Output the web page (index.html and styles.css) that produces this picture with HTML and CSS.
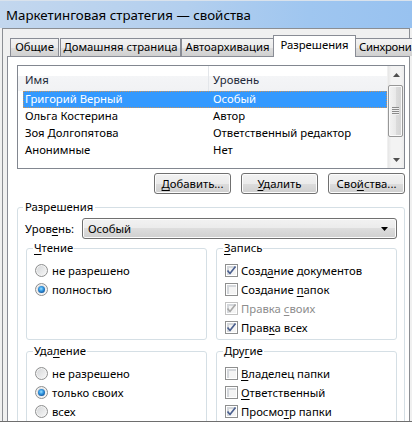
FILE: index.html
```html
<!DOCTYPE html>
<html lang="ru">
<head>
  <meta charset="UTF-8" />
  <title>Маркетинговая стратегия — свойства</title>
  <link rel="stylesheet" href="styles.css">
</head>
<body>
  <div class="window">
    <div class="titlebar">Маркетинговая стратегия — свойства</div>
    <div class="client">
      <div class="tabs">
        <div class="tab t-general">Общие</div>
        <div class="tab t-home">Домашняя страница</div>
        <div class="tab t-archive">Автоархивация</div>
        <div class="tab active">Разрешения</div>
        <div class="tab t-sync">Синхрони</div>
      </div>
      <div class="panel">
        <div class="listview">
          <div class="lv-main">
            <div class="lv-head">
              <div class="col-name">Имя</div>
              <div class="col-level">Уровень</div>
            </div>
            <div class="lv-row selected"><div class="col-name">Григорий Верный</div><div class="col-level">Особый</div></div>
            <div class="lv-row"><div class="col-name">Ольга Костерина</div><div class="col-level">Автор</div></div>
            <div class="lv-row"><div class="col-name">Зоя Долгопятова</div><div class="col-level">Ответственный редактор</div></div>
            <div class="lv-row"><div class="col-name">Анонимные</div><div class="col-level">Нет</div></div>
          </div>
          <div class="vscroll">
            <div class="sb-btn">
              <svg width="7" height="4" viewBox="0 0 7 4"><path d="M0 4 L3.5 0 L7 4 Z" fill="#4f4f4f"/></svg>
            </div>
            <div class="sb-track">
              <div class="sb-thumb"><span class="grip"></span></div>
            </div>
            <div class="sb-btn">
              <svg width="7" height="4" viewBox="0 0 7 4"><path d="M0 0 L3.5 4 L7 0 Z" fill="#4f4f4f"/></svg>
            </div>
          </div>
        </div>

        <div class="actions">
          <button class="btn"><u>Д</u>обавить...</button>
          <button class="btn"><u>У</u>далить</button>
          <button class="btn">Сво<u>й</u>ства...</button>
        </div>

        <fieldset class="group outer">
          <legend>Разрешения</legend>
          <div class="level-row">
            <span class="level-label">Уров<u>е</u>нь:</span>
            <div class="combo">
              <span>Особый</span>
              <svg width="7" height="4" viewBox="0 0 7 4"><path d="M0 0 L3.5 4 L7 0 Z" fill="#000"/></svg>
            </div>
          </div>

          <div class="subgroups">
            <fieldset class="group sub">
              <legend><u>Ч</u>тение</legend>
              <div class="opt"><span class="radio"></span><span>не разрешено</span></div>
              <div class="opt"><span class="radio on"></span><span>полностью</span></div>
            </fieldset>

            <fieldset class="group sub">
              <legend><u>З</u>апись</legend>
              <div class="opt"><span class="check on"><svg width="11" height="11" viewBox="0 0 11 11"><path d="M1.5 5.5 L4 8.5 L9.5 1.5" /></svg></span><span>Созд<u>а</u>ние документов</span></div>
              <div class="opt"><span class="check"></span><span>Создание <u>п</u>апок</span></div>
              <div class="opt disabled"><span class="check on"><svg width="11" height="11" viewBox="0 0 11 11"><path d="M1.5 5.5 L4 8.5 L9.5 1.5" /></svg></span><span>Правка <u>с</u>воих</span></div>
              <div class="opt"><span class="check on"><svg width="11" height="11" viewBox="0 0 11 11"><path d="M1.5 5.5 L4 8.5 L9.5 1.5" /></svg></span><span>Прав<u>к</u>а всех</span></div>
            </fieldset>

            <fieldset class="group sub">
              <legend>Уда<u>л</u>ение</legend>
              <div class="opt"><span class="radio"></span><span>не разрешено</span></div>
              <div class="opt"><span class="radio on"></span><span>только своих</span></div>
              <div class="opt"><span class="radio"></span><span>всех</span></div>
            </fieldset>

            <fieldset class="group sub">
              <legend>Дру<u>г</u>ие</legend>
              <div class="opt"><span class="check"></span><span><u>В</u>ладелец папки</span></div>
              <div class="opt"><span class="check"></span><span><u>О</u>тветственный</span></div>
              <div class="opt"><span class="check on"><svg width="11" height="11" viewBox="0 0 11 11"><path d="M1.5 5.5 L4 8.5 L9.5 1.5" /></svg></span><span>Просмо<u>т</u>р папки</span></div>
            </fieldset>
          </div>
        </fieldset>
      </div>
    </div>
  </div>
</body>
</html>
```

FILE: styles.css
```css
* {
  box-sizing: border-box;
}

body {
  margin: 0;
  background-color: #f0f0f0;
  font-family: 'Noto Sans', sans-serif;
  font-size: 11.3px;
  color: #000;
}

u {
  text-decoration-thickness: 1px;
  text-underline-offset: 2px;
}

.window {
  width: 412px;
  height: 422px;
  overflow: hidden;
  display: flex;
  flex-direction: column;
  background-color: #f0f0f0;
  border-bottom: 1px solid #6e6e6e;
}

.titlebar {
  flex: none;
  height: 28px;
  padding-left: 6px;
  display: flex;
  align-items: center;
  font-size: 13.3px;
  background: linear-gradient(to right, #c3d7ee 0%, #b3cfee 45%, #9fc6f0 75%, #98c2f0 100%);
  border-top: 1px solid #d9e2ec;
}

.client {
  flex: 1;
  margin: 0 2px;
  padding-left: 4px;
  border-left: 1px solid #8b8e93;
  border-right: 1px solid #8b8e93;
  border-top: 1px solid #8b8e93;
}

/* tabs */
.tabs {
  display: flex;
  align-items: flex-end;
  height: 28px;
  padding-left: 3px;
}

.tab {
  flex: none;
  height: 18px;
  margin-bottom: 1px;
  border: 1px solid #898c95;
  border-bottom: none;
  line-height: 16px;
  text-align: center;
  white-space: nowrap;
  background: linear-gradient(#f3f3f3, #ebebeb 50%, #dedede 50%, #d0d0d0);
}

.t-general { width: 49px; }
.t-home { width: 121px; margin-left: 1px; }
.t-archive { width: 93px; }
.t-sync { padding: 0 0 0 3px; border-right: none; letter-spacing: -0.25px; }

.tab.active {
  position: relative;
  z-index: 2;
  width: 83px;
  height: 22px;
  margin: 0 -1px 0 -1px;
  padding-top: 1px;
  background: #fff;
}

.panel {
  margin-top: -1px;
  height: 400px;
  padding: 8px 0 0 9px;
  background: #fff;
  border-top: 1px solid #898c95;
  border-left: 1px solid #898c95;
}

/* list view */
.listview {
  display: flex;
  width: 388px;
  height: 104px;
  border: 1px solid #828790;
  background: #fff;
}

.lv-main {
  flex: 1;
  overflow: hidden;
}

.lv-head {
  display: flex;
  height: 25px;
  background: linear-gradient(#fff 0%, #fff 40%, #f4f5f7 40%, #f1f2f4 100%);
  color: #1e2a3a;
}

.lv-head .col-name {
  width: 191px;
  padding: 6px 0 0 7px;
  border-right: 1px solid #e3e6ea;
}

.lv-head .col-level {
  padding: 6px 0 0 4px;
}

.lv-row {
  display: flex;
  height: 17px;
  margin-left: 5px;
  line-height: 16px;
}

.lv-row .col-name {
  width: 186px;
  padding-left: 2px;
}

.lv-row .col-level {
  padding-left: 4px;
}

.lv-row.selected {
  background: #3399ff;
  color: #fff;
  outline: 1px dotted #c7935e;
  outline-offset: -1px;
}

.vscroll {
  flex: none;
  width: 17px;
  display: flex;
  flex-direction: column;
  background: linear-gradient(to right, #e6e6e6, #f3f3f3 20%, #f3f3f3 80%, #ececec);
  border-left: 1px solid #f0f0f0;
}

.sb-btn {
  height: 17px;
  display: flex;
  align-items: center;
  justify-content: center;
}

.sb-track {
  flex: 1;
  padding: 2px 1px 0 0;
}

.sb-thumb {
  height: 52px;
  border: 1px solid #979797;
  border-radius: 2px;
  background: linear-gradient(to right, #f3f3f3, #e9e9e9 50%, #dcdcdc 50%, #d3d3d3);
  box-shadow: inset 0 0 0 1px #fafafa;
  display: flex;
  align-items: center;
  justify-content: center;
}

.grip {
  width: 7px;
  height: 8px;
  background: repeating-linear-gradient(#8a8a8a 0, #8a8a8a 1px, #f0f0f0 1px, #f0f0f0 2px);
}

/* buttons */
.actions {
  width: 388px;
  margin-top: 4px;
  display: flex;
  justify-content: flex-end;
  gap: 10px;
}

.btn {
  width: 77px;
  height: 21px;
  padding: 0;
  font-family: inherit;
  font-size: inherit;
  color: #000;
  border: 1px solid #707070;
  border-radius: 3px;
  background: linear-gradient(#f2f2f2, #ebebeb 50%, #dddddd 50%, #cfcfcf);
  box-shadow: inset 0 0 0 1px #fcfcfc;
}

/* group boxes */
.group {
  margin: 0;
  min-width: 0;
  border: 1px solid #d5dfe5;
  border-radius: 3px;
}

.group legend {
  line-height: 16px;
  padding: 0 2px;
}

.outer {
  width: 388px;
  margin-top: 5px;
  padding: 0 7px 0 8px;
}

.outer > legend {
  margin-left: -3px;
}

.level-row {
  display: flex;
  align-items: center;
  height: 21px;
  margin-top: 3px;
}

.level-label {
  width: 57px;
  margin-left: -1px;
}

.combo {
  flex: 1;
  height: 21px;
  display: flex;
  align-items: center;
  justify-content: space-between;
  padding: 0 8px 0 5px;
  border: 1px solid #707070;
  border-radius: 3px;
  background: linear-gradient(#f2f2f2, #ebebeb 50%, #dddddd 50%, #cfcfcf);
  box-shadow: inset 0 0 0 1px #fcfcfc;
}

.subgroups {
  display: grid;
  grid-template-columns: 181px 181px;
  column-gap: 9px;
  row-gap: 3px;
  margin-top: 1px;
}

.sub {
  padding: 5px 4px 2px 8px;
}

.sub > legend {
  margin-left: -2px;
  padding: 0 1px;
}

.opt {
  display: flex;
  align-items: center;
  height: 19px;
  white-space: nowrap;
}

.opt.disabled {
  color: #8d8d8d;
}

.radio {
  flex: none;
  width: 13px;
  height: 13px;
  margin-right: 4px;
  border-radius: 50%;
  border: 1px solid #8e8f8f;
  background: linear-gradient(135deg, #d2d4d6, #f9f9f9);
  box-shadow: inset 0 0 0 1px #f4f4f4;
  display: flex;
  align-items: center;
  justify-content: center;
}

.radio.on::after {
  content: "";
  width: 7px;
  height: 7px;
  border-radius: 50%;
  background: radial-gradient(circle at 45% 40%, #9be0ff 0, #3a9ee6 35%, #1660a8 70%, #0f3f78 100%);
}

.check {
  flex: none;
  width: 13px;
  height: 13px;
  margin-right: 3px;
  border: 1px solid #8e8f8f;
  background: #f4f4f4;
  box-shadow: inset 0 0 0 1px #fff, inset 1px 1px 0 2px #d4d7db;
  display: flex;
  align-items: center;
  justify-content: center;
}

.check svg path {
  fill: none;
  stroke: #4a5f8f;
  stroke-width: 1.7;
}

.opt.disabled .check {
  border-color: #c2c2c2;
}

.opt.disabled .check svg path {
  stroke: #a8a8a8;
}
```
